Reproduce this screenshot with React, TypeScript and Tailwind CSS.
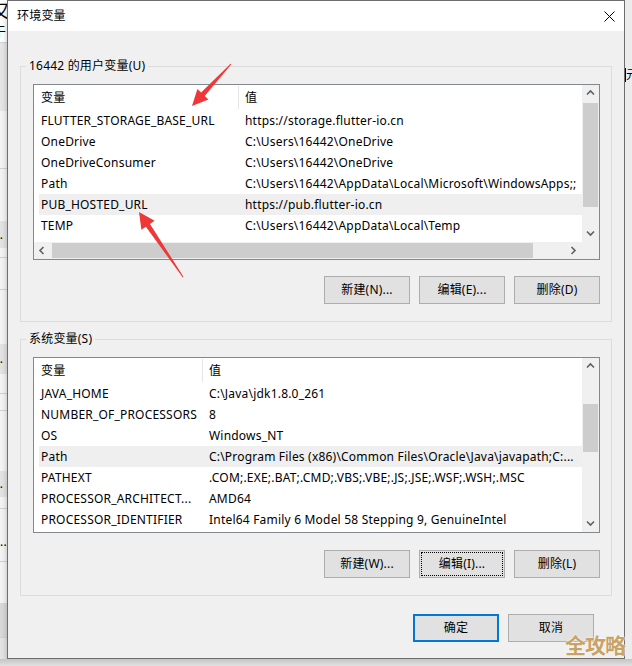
import React from "react";

const userVars: [string, string][] = [
  ["FLUTTER_STORAGE_BASE_URL", "https://storage.flutter-io.cn"],
  ["OneDrive", "C:\\Users\\16442\\OneDrive"],
  ["OneDriveConsumer", "C:\\Users\\16442\\OneDrive"],
  ["Path", "C:\\Users\\16442\\AppData\\Local\\Microsoft\\WindowsApps;;"],
  ["PUB_HOSTED_URL", "https://pub.flutter-io.cn"],
  ["TEMP", "C:\\Users\\16442\\AppData\\Local\\Temp"],
];

const sysVars: [string, string][] = [
  ["JAVA_HOME", "C:\\Java\\jdk1.8.0_261"],
  ["NUMBER_OF_PROCESSORS", "8"],
  ["OS", "Windows_NT"],
  ["Path", "C:\\Program Files (x86)\\Common Files\\Oracle\\Java\\javapath;C:..."],
  ["PATHEXT", ".COM;.EXE;.BAT;.CMD;.VBS;.VBE;.JS;.JSE;.WSF;.WSH;.MSC"],
  ["PROCESSOR_ARCHITECT...", "AMD64"],
  ["PROCESSOR_IDENTIFIER", "Intel64 Family 6 Model 58 Stepping 9, GenuineIntel"],
];

function Chevron({ dir }: { dir: "up" | "down" | "left" | "right" }) {
  const pts = {
    up: "1,5.5 4.5,2 8,5.5",
    down: "1,2.5 4.5,6 8,2.5",
    left: "5.5,1 2,4.5 5.5,8",
    right: "2.5,1 6,4.5 2.5,8",
  }[dir];
  return (
    <svg width="9" height="9" viewBox="0 0 9 9">
      <polyline points={pts} fill="none" stroke="#606060" strokeWidth="1.6" />
    </svg>
  );
}

function VScroll({ thumbTop, thumbH }: { thumbTop: string; thumbH: string }) {
  return (
    <div className="flex w-[17px] flex-col bg-[#f0f0f0]">
      <div className="flex h-[17px] items-center justify-center">
        <Chevron dir="up" />
      </div>
      <div className={`flex-1 px-[1px] ${thumbTop}`}>
        <div className={`bg-[#cdcdcd] ${thumbH}`} />
      </div>
      <div className="flex h-[17px] items-center justify-center">
        <Chevron dir="down" />
      </div>
    </div>
  );
}

function ListView({
  rows,
  nameW,
  headW,
  active,
  thumbTop,
  thumbH,
  hscroll,
}: {
  rows: [string, string][];
  nameW: string;
  headW: string;
  active: number;
  thumbTop: string;
  thumbH: string;
  hscroll?: boolean;
}) {
  return (
    <div className="flex h-[176px] flex-col border border-[#828790] bg-white">
      <div className="flex min-h-0 flex-1">
        <div className="flex-1 overflow-hidden whitespace-nowrap">
          <div className="flex h-[25px] items-center">
            <div className={`${headW} pl-[7px]`}>变量</div>
            <div className="h-[23px] w-px bg-[#e5e5e5]" />
            <div className="pl-[6px]">值</div>
          </div>
          {rows.map(([name, value], i) => (
            <div
              key={i}
              className={`ml-[5px] flex h-[21px] items-center pt-[1px] ${i === active ? "bg-[#efefef]" : ""}`}
            >
              <div className={`${nameW} shrink-0 pl-[2px]`}>{name}</div>
              <div className="pl-[7px]">{value}</div>
            </div>
          ))}
        </div>
        <VScroll thumbTop={thumbTop} thumbH={thumbH} />
      </div>
      {hscroll && (
        <div className="flex h-[17px]">
          <div className="flex flex-1 bg-[#f0f0f0]">
            <div className="flex w-[17px] items-center justify-center">
              <Chevron dir="left" />
            </div>
            <div className="flex-1 py-[1px] pl-[1px]">
              <div className="h-full w-[481px] bg-[#cdcdcd]" />
            </div>
            <div className="flex w-[17px] items-center justify-center">
              <Chevron dir="right" />
            </div>
          </div>
          <div className="w-[17px] bg-[#f0f0f0]" />
        </div>
      )}
    </div>
  );
}

function Btn({ children, focus }: { children: React.ReactNode; focus?: boolean }) {
  return (
    <div className="flex h-[28px] w-[86px] border border-[#adadad] bg-[#e1e1e1] p-[1px]">
      <div
        className={`flex flex-1 items-center justify-center ${focus ? "border border-dotted border-black" : ""}`}
      >
        {children}
      </div>
    </div>
  );
}

function Group({ label, children }: { label: string; children: React.ReactNode }) {
  return (
    <div className="border border-[#dcdcdc] pb-[17px] pl-[12px] pr-[11px]">
      <div className="-mt-[9px] ml-[-7px] w-fit bg-[#f0f0f0] px-[3px] leading-[16px]">{label}</div>
      {children}
    </div>
  );
}

function LeftStrip() {
  const line = "h-px bg-[#d2d2d2]";
  return (
    <div className="flex w-[7px] flex-col overflow-hidden bg-[#f4f4f4] text-black">
      <div className="h-[22px] bg-white text-[18px] leading-[22px] -indent-[8px]">又</div>
      <div className="h-[20px] bg-white text-[14px] leading-[20px] -indent-[8px]">于</div>
      <div className={line} />
      <div className="h-[68px] bg-[#e6e6e6]" />
      <div className="h-[57px]" />
      <div className={line} />
      <div className="h-[52px]" />
      <div className="h-[27px] bg-[#e3e3e3] leading-[27px] -indent-[4px]">).</div>
      <div className="h-[9px]" />
      <div className={line} />
      <div className="h-[31px]" />
      <div className={line} />
      <div className="h-[54px]" />
      <div className="h-[30px] bg-[#e3e3e3] leading-[30px] -indent-[4px]">).</div>
      <div className="h-[19px]" />
      <div className={line} />
      <div className="h-[16px]" />
      <div className={line} />
      <div className="h-[60px]" />
      <div className="h-[26px] bg-[#e3e3e3] leading-[26px] -indent-[4px]">).</div>
      <div className="h-[11px]" />
      <div className={line} />
      <div className="h-[22px]" />
      <div className="h-[21px] leading-[21px]">....</div>
      <div className="h-[9px]" />
      <div className={line} />
      <div className="h-[41px]" />
      <div className="h-[34px] bg-[#d9d9d9]" />
      <div className={line} />
      <div className="flex-1 bg-[#e4e4e4]" />
    </div>
  );
}

function RightStrip() {
  return (
    <div className="flex w-[7px] flex-col overflow-hidden bg-[#ececec]">
      <div className="h-[68px]" />
      <div className="h-[14px] border-l border-black text-[12px] leading-[14px]">元</div>
      <div className="flex-1" />
    </div>
  );
}

function Arrows() {
  return (
    <svg className="pointer-events-none absolute left-0 top-0" width="632" height="666">
      <polygon
        fill="#ef3737"
        points="231.4,64.3 204.7,96 208.4,99.5 192,106 197.4,89.1 201.1,92.6 230.6,63.7"
      />
      <polygon
        fill="#ef3737"
        points="183.4,276.7 150,223.9 154.6,220.8 139,212 141.4,229.7 145.9,226.7 182.6,277.3"
      />
    </svg>
  );
}

export default function App() {
  return (
    <div className="relative flex h-[666px] w-[632px] flex-col overflow-hidden bg-[#e4e4e4] font-['Noto_Sans','Noto_Sans_CJK_SC',sans-serif] text-[12px] tracking-[0.2px] text-black">
      <div className="flex h-[659px]">
        <LeftStrip />
        <div className="flex w-[618px] flex-col border border-[#6e6e6e] bg-[#f0f0f0] shadow-[0_2px_6px_rgba(0,0,0,0.25)]">
          <div className="flex h-[30px] items-center justify-between bg-white pl-[9px] pr-[9px]">
            <span>环境变量</span>
            <svg width="11" height="11" viewBox="0 0 11 11">
              <path d="M0.5 0.5 L10.5 10.5 M10.5 0.5 L0.5 10.5" stroke="#000" strokeWidth="1" />
            </svg>
          </div>
          <div className="flex flex-1 flex-col px-[12px] pt-[35px]">
            <Group label="16442 的用户变量(U)">
              <div className="mt-[10px]">
                <ListView
                  rows={userVars}
                  headW="w-[204px]"
                  nameW="w-[199px]"
                  active={4}
                  thumbTop="pt-[1px]"
                  thumbH="h-[104px]"
                  hscroll
                />
              </div>
              <div className="mt-[16px] flex justify-end gap-[9px]">
                <Btn>新建(N)...</Btn>
                <Btn>编辑(E)...</Btn>
                <Btn>删除(D)</Btn>
              </div>
            </Group>
            <div className="mt-[17px]">
              <Group label="系统变量(S)">
                <div className="mt-[10px]">
                  <ListView
                    rows={sysVars}
                    headW="w-[168px]"
                    nameW="w-[163px]"
                    active={3}
                    thumbTop="pt-[29px]"
                    thumbH="h-[48px]"
                  />
                </div>
                <div className="mt-[17px] flex justify-end gap-[9px]">
                  <Btn>新建(W)...</Btn>
                  <Btn focus>编辑(I)...</Btn>
                  <Btn>删除(L)</Btn>
                </div>
              </Group>
            </div>
            <div className="mt-[18px] flex justify-end gap-[9px] pr-[18px]">
              <div className="flex h-[28px] w-[86px] items-center justify-center border-2 border-[#0078d7] bg-[#e1e1e1]">
                确定
              </div>
              <Btn>取消</Btn>
            </div>
          </div>
        </div>
        <RightStrip />
      </div>
      <div className="flex-1 bg-gradient-to-b from-[#c4c4c4] to-[#e2e2e2]" />
      <Arrows />
      <div className="absolute left-[565px] top-[632px] text-[21px] font-bold leading-[26px] tracking-[-1px] text-[#c9a265] [text-shadow:0_0_2px_#fff,0_0_1px_#fff]">
        全攻略
      </div>
    </div>
  );
}
